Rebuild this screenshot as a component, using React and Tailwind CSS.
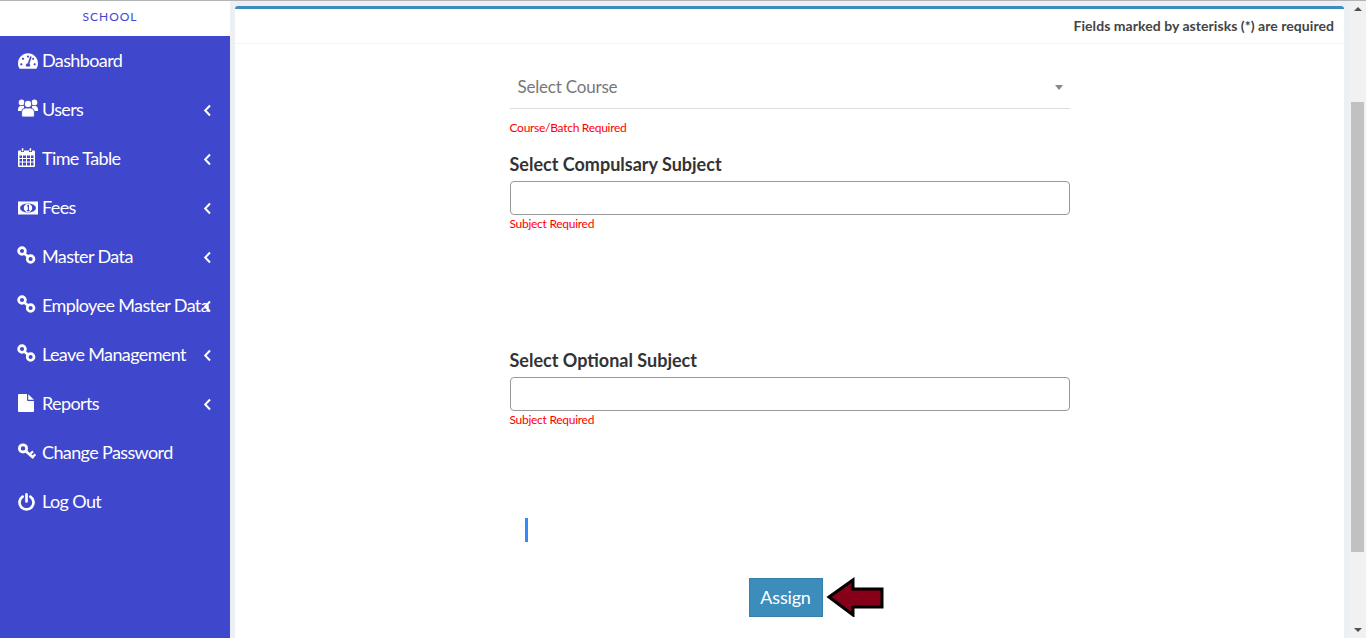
import React from "react";
import { FaTachometerAlt } from "react-icons/fa";

const Chain = () => (
  <svg className="-ml-px -translate-y-px" width="19" height="19" viewBox="0 0 19 19" fill="none" stroke="currentColor" strokeWidth="2.7">
    <circle cx="5" cy="5" r="3.4" />
    <circle cx="13.6" cy="13" r="3.4" />
    <path d="M7 7.2 L11.4 11" />
  </svg>
);

const Chevron = () => (
  <svg className="absolute left-[203px] top-[19px]" width="9" height="13" viewBox="0 0 9 13" fill="none" stroke="currentColor" strokeWidth="2">
    <path d="M7 1.5 L2.2 6.5 L7 11.5" />
  </svg>
);

const Users = () => (
  <svg className="-translate-y-[2px]" width="20" height="18" viewBox="0 0 20 18" fill="currentColor">
    <circle cx="3.6" cy="3.4" r="2.9" />
    <circle cx="16.4" cy="3.4" r="2.9" />
    <path d="M0 11 Q0 7 3 7 H6 V12 H0 Z" />
    <path d="M20 11 Q20 7 17 7 H14 V12 H20 Z" />
    <circle cx="10" cy="5" r="3.8" stroke="#3f47cc" strokeWidth="1" />
    <path d="M3.6 17 V13 Q3.6 9 7.5 9 H12.5 Q16.4 9 16.4 13 V17 Q16.4 18 14.5 18 H5.5 Q3.6 18 3.6 17 Z" stroke="#3f47cc" strokeWidth="0.8" />
  </svg>
);

const Calendar = () => (
  <svg className="-translate-y-px" width="17" height="19" viewBox="0 0 17 19" fill="currentColor">
    <path fillRule="evenodd" d="M1 2.5 H3 V4 H6 V2.5 H11 V4 H14 V2.5 H16 Q17 2.5 17 3.5 V18 Q17 19 16 19 H1 Q0 19 0 18 V3.5 Q0 2.5 1 2.5 Z M1.5 7.5 V10 H4 V7.5 Z M5 7.5 V10 H8 V7.5 Z M9 7.5 V10 H12 V7.5 Z M13 7.5 V10 H15.5 V7.5 Z M1.5 11 V13.5 H4 V11 Z M5 11 V13.5 H8 V11 Z M9 11 V13.5 H12 V11 Z M13 11 V13.5 H15.5 V11 Z M1.5 14.5 V17.5 H4 V14.5 Z M5 14.5 V17.5 H8 V14.5 Z M9 14.5 V17.5 H12 V14.5 Z M13 14.5 V17.5 H15.5 V14.5 Z" />
    <rect x="3.8" y="0" width="1.6" height="3.4" rx="0.8" />
    <rect x="11.6" y="0" width="1.6" height="3.4" rx="0.8" />
  </svg>
);

const Money = () => (
  <svg width="20" height="14" viewBox="0 0 20 14">
    <rect width="20" height="13" y="0.5" fill="currentColor" />
    <ellipse cx="10" cy="7" rx="8" ry="4.6" fill="#3f47cc" />
    <circle cx="10" cy="7" r="4.2" fill="currentColor" />
    <path d="M9 5 L10.4 4.4 V9.4 M8.8 9.6 H11.6" stroke="#3f47cc" strokeWidth="1.1" fill="none" />
  </svg>
);

const FileIcon = () => (
  <svg className="-translate-y-px" width="16" height="18" viewBox="0 0 16 18" fill="currentColor">
    <path d="M0 1 Q0 0 1 0 H9 V6 Q9 7 10 7 H16 V17 Q16 18 15 18 H1 Q0 18 0 17 Z" />
    <path d="M10.2 0.2 L16 5.8 H10.2 Z" />
  </svg>
);

const Key = () => (
  <svg className="-translate-y-px" width="18" height="17" viewBox="0 0 18 17" fill="none" stroke="currentColor">
    <circle cx="5" cy="5.4" r="3.6" strokeWidth="2.8" />
    <path d="M7.6 8 L15.6 15" strokeWidth="2.8" />
    <path d="M12.2 11 L15 8.4 M15 13.6 L17.4 11.4" strokeWidth="2.2" />
  </svg>
);

const Power = () => (
  <svg width="17" height="18" viewBox="0 0 17 18" fill="none" stroke="currentColor" strokeWidth="2.7" strokeLinecap="round">
    <path d="M4.6 3.6 A7 7 0 1 0 12.4 3.6" />
    <path d="M8.5 1.4 V8.4" />
  </svg>
);

const items = [
  ["Dashboard", <FaTachometerAlt size={20} />, false],
  ["Users", <Users />, true],
  ["Time Table", <Calendar />, true],
  ["Fees", <Money />, true],
  ["Master Data", <Chain />, true],
  ["Employee Master Data", <Chain />, true],
  ["Leave Management", <Chain />, true],
  ["Reports", <FileIcon />, true],
  ["Change Password", <Key />, false],
  ["Log Out", <Power />, false],
];

const Err = ({ children, className = "" }) => (
  <div className={"text-[12px] leading-[14px] tracking-[-0.28px] text-[#ff0000] " + className}>{children}</div>
);

export default function App() {
  return (
    <div className="flex h-[638px] overflow-hidden bg-[#ecf0f5] border-t border-[#b4b4b4] text-[#333] font-['Lato','Noto_Sans',sans-serif]">
      <aside className="w-[230px] shrink-0 bg-[#3f47cc] text-white">
        <div className="h-[35px] bg-white flex items-center justify-center pb-[4px] pr-[10px] text-[12px] tracking-[1px] text-[#3f47cc]">SCHOOL</div>
        <nav>
          {items.map(([label, icon, arrow]) => (
            <div key={label} className="relative h-[49px] flex items-center pl-[18px] text-[18px] whitespace-nowrap">
              <span className="w-[24px] shrink-0 flex items-center">{icon}</span>
              <span className="tracking-[-0.62px]">{label}</span>
              {arrow && <Chevron />}
            </div>
          ))}
        </nav>
      </aside>

      <main className="flex-1 min-w-0 px-[5px] pt-[5px]">
        <div className="h-full bg-white border-t-[3px] border-[#3c8dbc] rounded-t-[3px]">
          <div className="h-[35px] border-b border-[#f4f4f4] flex items-center justify-end pr-[10px] pb-[2px] text-[14px] tracking-[0.05px] font-bold text-[#444]">
            Fields marked by asterisks (*) are required
          </div>
          <div className="w-[560px] mx-auto pt-[22px]">
            <div className="h-[43px] border-b border-[#ddd] flex items-center justify-between pl-[8px] pr-[7px] text-[17px] tracking-[-0.2px] text-[#777]">
              <span>Select Course</span>
              <span className="w-0 h-0 border-x-[4px] border-x-transparent border-t-[5px] border-t-[#888]" />
            </div>
            <Err className="mt-[12px]">Course/Batch Required</Err>
            <div className="mt-[17px] text-[18px] leading-[25px] font-bold text-[#333]">Select Compulsary Subject</div>
            <div className="mt-[4px] h-[34px] border border-[#999] rounded-[4px]" />
            <Err className="mt-[2px]">Subject Required</Err>
            <div className="mt-[117px] text-[18px] leading-[25px] font-bold text-[#333]">Select Optional Subject</div>
            <div className="mt-[4px] h-[34px] border border-[#999] rounded-[4px]" />
            <Err className="mt-[2px]">Subject Required</Err>
            <div className="mt-[91px] ml-[15px] w-[3px] h-[24px] bg-[#3388ff]" />
            <div className="mt-[35px] ml-[239px] flex items-center">
              <button className="w-[74px] h-[39px] bg-[#3c8dbc] border border-[#367fa9] text-white text-[18px] tracking-[-0.2px]">Assign</button>
              <svg className="ml-[3px]" width="58" height="40" viewBox="0 0 58 40">
                <path d="M3 20 L27 3 V12 H56 V30 H27 V38 Z" fill="#850018" stroke="#000" strokeWidth="3" />
              </svg>
            </div>
          </div>
        </div>
      </main>

      <div className="w-[17px] shrink-0 bg-[#f1f1f1] flex flex-col items-center">
        <span className="mt-[6px] w-0 h-0 border-x-[4px] border-x-transparent border-b-[4px] border-b-[#505050]" />
        <div className="mt-[91px] w-[13px] h-[450px] bg-[#c1c1c1]" />
        <span className="mt-[76px] w-0 h-0 border-x-[4px] border-x-transparent border-t-[4px] border-t-[#505050]" />
      </div>
    </div>
  );
}
